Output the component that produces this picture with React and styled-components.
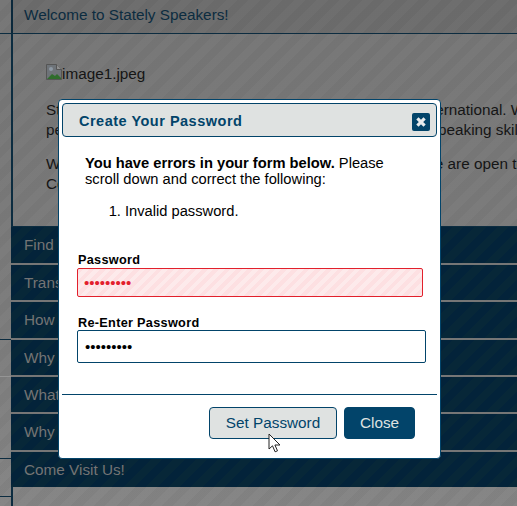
import React from "react";
import styled, { createGlobalStyle, css } from "styled-components";

const stripes = (a, b, w = 8) =>
  `repeating-linear-gradient(135deg, ${a} 0, ${a} ${w}px, ${b} ${w}px, ${b} ${w * 2}px)`;

const Global = createGlobalStyle`
  html, body { margin: 0; padding: 0; height: 100%; overflow: hidden; }
  body { font-family: "Liberation Sans", Arial, sans-serif; font-size: 15.3px; }
  * { box-sizing: border-box; }
`;

const Page = styled.div`
  position: relative;
  width: 517px;
  height: 506px;
  overflow: hidden;
  display: grid;
  grid-template-columns: 13px 1fr;
  background: ${stripes("rgba(255,255,255,0.025)", "rgba(0,0,0,0.01)")}, linear-gradient(#747474, #7a7a7a 60%, #838383);
`;

const Rail = styled.div`
  border-right: 2px solid #0c2c40;
  display: flex;
  flex-direction: column;
`;

const RailCell = styled.div`
  height: ${(p) => p.$h}px;
  flex: none;
  border-bottom: 1px solid ${(p) => p.$line || "#0c2c40"};
`;

const Main = styled.div`
  display: flex;
  flex-direction: column;
  min-width: 0;
`;

const Header = styled.div`
  height: 34px;
  flex: none;
  margin-left: -2px;
  padding: 0 0 3px 13px;
  display: flex;
  align-items: center;
  border-bottom: 1px solid #0c2c40;
  background: rgba(0, 0, 0, 0.07);
  color: #0c2c40;
  white-space: nowrap;
`;

const Content = styled.div`
  height: 192px;
  flex: none;
  padding: 30px 0 0 33px;
  color: #151515;
  line-height: 20px;
  white-space: nowrap;
`;

const Broken = styled.div`
  display: flex;
  align-items: flex-start;
  height: 16px;
  margin-bottom: 20px;
`;

const Para = styled.p`
  margin: 0 0 14px;
`;

const Nav = styled.nav`
  display: flex;
  flex-direction: column;
  border-top: 1px solid #0c2c40;
  margin-left: -2px;
`;

const NavItem = styled.div`
  height: ${(p) => p.$h}px;
  flex: none;
  padding-left: 13px;
  display: flex;
  align-items: center;
  color: #747474;
  border-bottom: ${(p) => (p.$last ? "none" : "2px solid #767676")};
  background: ${stripes("#03233a", "#072738")};
`;

const Dialog = styled.div`
  position: absolute;
  left: 58px;
  top: 99px;
  width: 383px;
  height: 360px;
  background: #fff;
  border: 1px solid #02446a;
  border-radius: 4px;
  padding: 3px;
  display: flex;
  flex-direction: column;
`;

const TitleBar = styled.div`
  height: 34px;
  flex: none;
  display: flex;
  align-items: center;
  justify-content: space-between;
  padding: 2px 6px 0 16px;
  background: #dfe2e1;
  border: 1px solid #02446a;
  border-radius: 4px;
  color: #02446a;
  font-weight: 700;
  font-size: 14.5px;
  letter-spacing: 0.5px;
`;

const CloseIcon = styled.button`
  width: 18px;
  height: 18px;
  margin: 2px 0 0;
  padding: 0;
  border: none;
  border-radius: 2px;
  background: #02446a;
  display: flex;
  align-items: center;
  justify-content: center;
`;

const Body = styled.div`
  flex: 1;
  padding: 18px 0 0 15px;
  color: #000;
  font-size: 14.7px;
  line-height: 16px;
`;

const Errors = styled.div`
  margin-left: 8px;
  width: 330px;
`;

const ErrorList = styled.ol`
  margin: 16px 0 0;
  padding: 0 0 0 40px;
  height: 50px;
`;

const Field = styled.div`
  margin-top: ${(p) => p.$mt}px;
`;

const Label = styled.label`
  display: block;
  padding-left: 1px;
  font-size: 12.7px;
  font-weight: 700;
  line-height: 14px;
  letter-spacing: 0.3px;
`;

const Input = styled.input`
  display: block;
  font-family: "Liberation Sans", Arial, sans-serif;
  font-size: 15px;
  outline: none;
  border-radius: 2px;
  ${(p) =>
    p.$error
      ? css`
          margin-top: 1px;
          width: 346px;
          height: 29px;
          padding: 0 6px;
          border: 1px solid #e2202c;
          color: #e2202c;
          background: ${stripes("#fde0e2", "#fdeaeb", 4)};
        `
      : css`
          width: 349px;
          height: 33px;
          padding: 0 7px;
          border: 1px solid #02446a;
          color: #000;
          background: #fff;
        `}
`;

const Rule = styled.hr`
  flex: none;
  margin: 0;
  border: none;
  height: 1px;
  background: #02446a;
`;

const Footer = styled.div`
  height: 60px;
  flex: none;
  display: flex;
  justify-content: flex-end;
  align-items: flex-start;
  gap: 7px;
  padding: 12px 22px 0 0;
`;

const Btn = styled.button`
  height: 32px;
  padding: 0;
  width: ${(p) => p.$w}px;
  font-family: "Liberation Sans", Arial, sans-serif;
  font-size: 15.3px;
  border-radius: 4px;
  border: 1px solid #02446a;
  color: ${(p) => (p.$primary ? "#dfe2e1" : "#02446a")};
  background: ${(p) => (p.$primary ? "#02446a" : "#dfe2e1")};
`;

const Cursor = styled.svg`
  position: absolute;
  left: 268px;
  top: 433px;
`;

const Thumb = () => (
  <svg width="16" height="16" viewBox="0 0 16 16">
    <path d="M0.5 0.5h10l5 5v10H0.5z" fill="#6e7378" stroke="#555" />
    <path d="M10.5 0.5v5h5" fill="#8f8f8f" stroke="#555" />
    <path d="M1 15l5-5 3 2 2-2 4 4v1H1z" fill="#2f6d2c" />
    <circle cx="5" cy="5" r="2" fill="#8d99a4" />
  </svg>
);

const navItems = [
  ["Find Us", 38],
  ["Transportation", 37],
  ["How to Join", 38],
  ["Why Join?", 37],
  ["What We Do", 37],
  ["Why Visit?", 38],
];

export default function App() {
  return (
    <>
      <Global />
      <Page>
        <Rail>
          <RailCell $h={34} />
          <RailCell $h={306} />
          <RailCell $h={37} $line="#959595" />
          <RailCell $h={82} />
          <RailCell $h={38} />
        </Rail>
        <Main>
          <Header>Welcome to Stately Speakers!</Header>
          <Content>
            <Broken>
              <Thumb />
              image1.jpeg
            </Broken>
            <Para>
              Stately Speakers is a club, and is part of Toastmasters International. We
              <br />
              people of all levels, of experience to improve their public speaking skills
            </Para>
            <Para>
              We meet every week and visitors are always welcome. We are open to
              <br />
              Come and see us!
            </Para>
          </Content>
          <Nav>
            {navItems.map(([t, h]) => (
              <NavItem key={t} $h={h}>{t}</NavItem>
            ))}
            <NavItem $last $h={35}>Come Visit Us!</NavItem>
          </Nav>
        </Main>
        <Dialog>
          <TitleBar>
            Create Your Password
            <CloseIcon aria-label="Close">
              <svg width="12" height="12" viewBox="0 0 12 12">
                <path d="M2.4 2.4l7.2 7.2M9.6 2.4L2.4 9.6" stroke="#e8ecee" strokeWidth="3.2" />
              </svg>
            </CloseIcon>
          </TitleBar>
          <Body>
            <Errors>
              <strong>You have errors in your form below.</strong> Please scroll down and correct the following:
              <ErrorList>
                <li>Invalid password.</li>
              </ErrorList>
            </Errors>
            <Field $mt={0}>
              <Label>Password</Label>
              <Input $error type="password" defaultValue="123456789" />
            </Field>
            <Field $mt={19}>
              <Label>Re-Enter Password</Label>
              <Input type="password" defaultValue="123456789" />
            </Field>
          </Body>
          <Rule />
          <Footer>
            <Btn $w={128}>Set Password</Btn>
            <Btn $w={71} $primary>Close</Btn>
          </Footer>
        </Dialog>
        <Cursor width="13" height="20" viewBox="0 0 13 20">
          <path d="M1 1v15l3.5-3.2 2.6 6 2.4-1-2.6-5.8H12z" fill="#fff" stroke="#222" strokeWidth="1" />
        </Cursor>
      </Page>
    </>
  );
}
